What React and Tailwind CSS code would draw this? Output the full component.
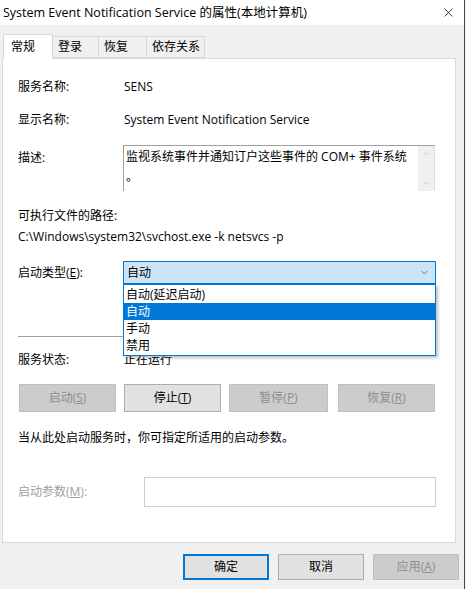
import { X, ChevronDown, ChevronUp } from 'lucide-react';

const font = { fontFamily: '"Open Sans", "Noto Sans CJK SC", sans-serif' };

function Tab({ label, active, w }) {
  if (active) {
    return (
      <div className={`${w} h-[25px] -mb-px bg-white border border-b-0 border-[#d9d9d9] flex items-center pl-[7px] relative z-10`}>
        {label}
      </div>
    );
  }
  return (
    <div className={`${w} h-[22px] bg-[#f0f0f0] border border-l-0 border-[#d9d9d9] flex items-center pl-[5px]`}>
      {label}
    </div>
  );
}

function PanelButton({ children, w, disabled, className = '' }) {
  return (
    <div
      className={`${w} h-[28px] flex items-center justify-center border ${
        disabled ? 'bg-[#cccccc] border-[#bfbfbf] text-[#8e8e8e]' : 'bg-[#e1e1e1] border-[#adadad] text-black'
      } ${className}`}
    >
      {children}
    </div>
  );
}

export default function App() {
  return (
    <div className="w-[466px] h-[589px] bg-[#f0f0f0] text-[12px] leading-[16px] text-black flex" style={font}>
      <div className="w-[465px] border-r border-[#4a4a4a] flex flex-col">
        {/* title bar */}
        <div className="h-[25px] bg-white flex items-center justify-between pl-[3px] pr-[8px]">
          <span className="text-[12.5px]">System Event Notification Service 的属性(本地计算机)</span>
          <X className="w-[15px] h-[15px] text-black" strokeWidth={1.2} />
        </div>

        {/* tabs */}
        <div className="mt-[9px] pl-[3px] flex items-end h-[24px]">
          <Tab label="常规" active w="w-[50px]" />
          <Tab label="登录" w="w-[46px]" />
          <Tab label="恢复" w="w-[48px]" />
          <Tab label="依存关系" w="w-[58px]" />
        </div>

        {/* panel */}
        <div className="ml-[2px] w-[454px] h-[485px] bg-white border border-[#d9d9d9] pl-[15px] flex flex-col relative">
          <div className="mt-[20px] h-[16px] flex items-center">
            <span className="w-[106px]">服务名称:</span>
            <span>SENS</span>
          </div>
          <div className="mt-[17px] h-[16px] flex items-center">
            <span className="w-[106px]">显示名称:</span>
            <span>System Event Notification Service</span>
          </div>
          <div className="mt-[17px] flex items-start">
            <span className="w-[105px] mt-[5px]">描述:</span>
            <div className="w-[312px] h-[46px] border border-[#a0a0a0] border-r-[#dcdcdc] border-b-0 flex">
              <div className="flex-1 pl-[2px] pt-[1px] leading-[20px]">
                监视系统事件并通知订户这些事件的 COM+ 事件系统
                <br />。
              </div>
              <div className="w-[16px] bg-[#f0f0f0] flex flex-col justify-between items-center py-[3px]">
                <ChevronUp className="w-[9px] h-[9px] text-[#c2c2c2]" strokeWidth={2} />
                <ChevronDown className="w-[9px] h-[9px] text-[#c2c2c2]" strokeWidth={2} />
              </div>
            </div>
          </div>
          <div className="mt-[17px] h-[16px] flex items-center">可执行文件的路径:</div>
          <div className="mt-[5px] h-[16px] flex items-center">C:\Windows\system32\svchost.exe -k netsvcs -p</div>
          <div className="mt-[16px] flex items-center">
            <span className="w-[105px]">
              启动类型(<u>E</u>):
            </span>
            <div className="w-[313px] h-[23px] bg-[#cce4f7] border border-[#0078d7] flex items-center justify-between pl-[3px] pr-[5px]">
              <span>自动</span>
              <ChevronDown className="w-[11px] h-[11px] text-[#404040]" strokeWidth={1.4} />
            </div>
          </div>
          <div className="mt-[52px] w-[417px] h-px bg-[#a0a0a0]" />
          <div className="mt-[15px] h-[16px] flex items-center">
            <span className="w-[106px]">服务状态:</span>
            <span>正在运行</span>
          </div>
          <div className="mt-[16px] flex">
            <PanelButton w="w-[97px]" disabled className="ml-[1px]">
              启动(<u>S</u>)
            </PanelButton>
            <PanelButton w="w-[97px]" className="ml-[8px]">
              停止(<u>T</u>)
            </PanelButton>
            <PanelButton w="w-[99px]" disabled className="ml-[8px]">
              暂停(<u>P</u>)
            </PanelButton>
            <PanelButton w="w-[97px]" disabled className="ml-[10px]">
              恢复(<u>R</u>)
            </PanelButton>
          </div>
          <div className="mt-[18px] h-[16px] flex items-center">当从此处启动服务时，你可指定所适用的启动参数。</div>
          <div className="mt-[31px] flex items-center">
            <span className="w-[126px] text-[#a0a0a0]">
              启动参数(<u>M</u>):
            </span>
            <div className="w-[292px] h-[30px] border border-[#cccccc] bg-white" />
          </div>

          {/* open dropdown list */}
          <div className="absolute left-[120px] top-[225px] w-[313px] h-[72px] bg-white border border-[#0078d7] shadow-[2px_2px_3px_rgba(0,0,0,0.25)] flex flex-col py-[1px]">
            <div className="h-[17px] flex items-center pl-[2px]">自动(延迟启动)</div>
            <div className="h-[17px] flex items-center pl-[2px] bg-[#0078d7] text-white">自动</div>
            <div className="h-[17px] flex items-center pl-[2px]">手动</div>
            <div className="h-[17px] flex items-center pl-[2px]">禁用</div>
          </div>
        </div>

        {/* dialog buttons */}
        <div className="mt-[11px] pl-[183px] flex gap-[9px]">
          <div className="w-[86px] h-[26px] bg-[#e1e1e1] border-2 border-[#0078d7] flex items-center justify-center">确定</div>
          <div className="w-[86px] h-[26px] bg-[#e1e1e1] border border-[#adadad] flex items-center justify-center">取消</div>
          <div className="w-[86px] h-[26px] bg-[#cccccc] border border-[#bfbfbf] text-[#8e8e8e] flex items-center justify-center">
            应用(<u>A</u>)
          </div>
        </div>
      </div>
    </div>
  );
}
